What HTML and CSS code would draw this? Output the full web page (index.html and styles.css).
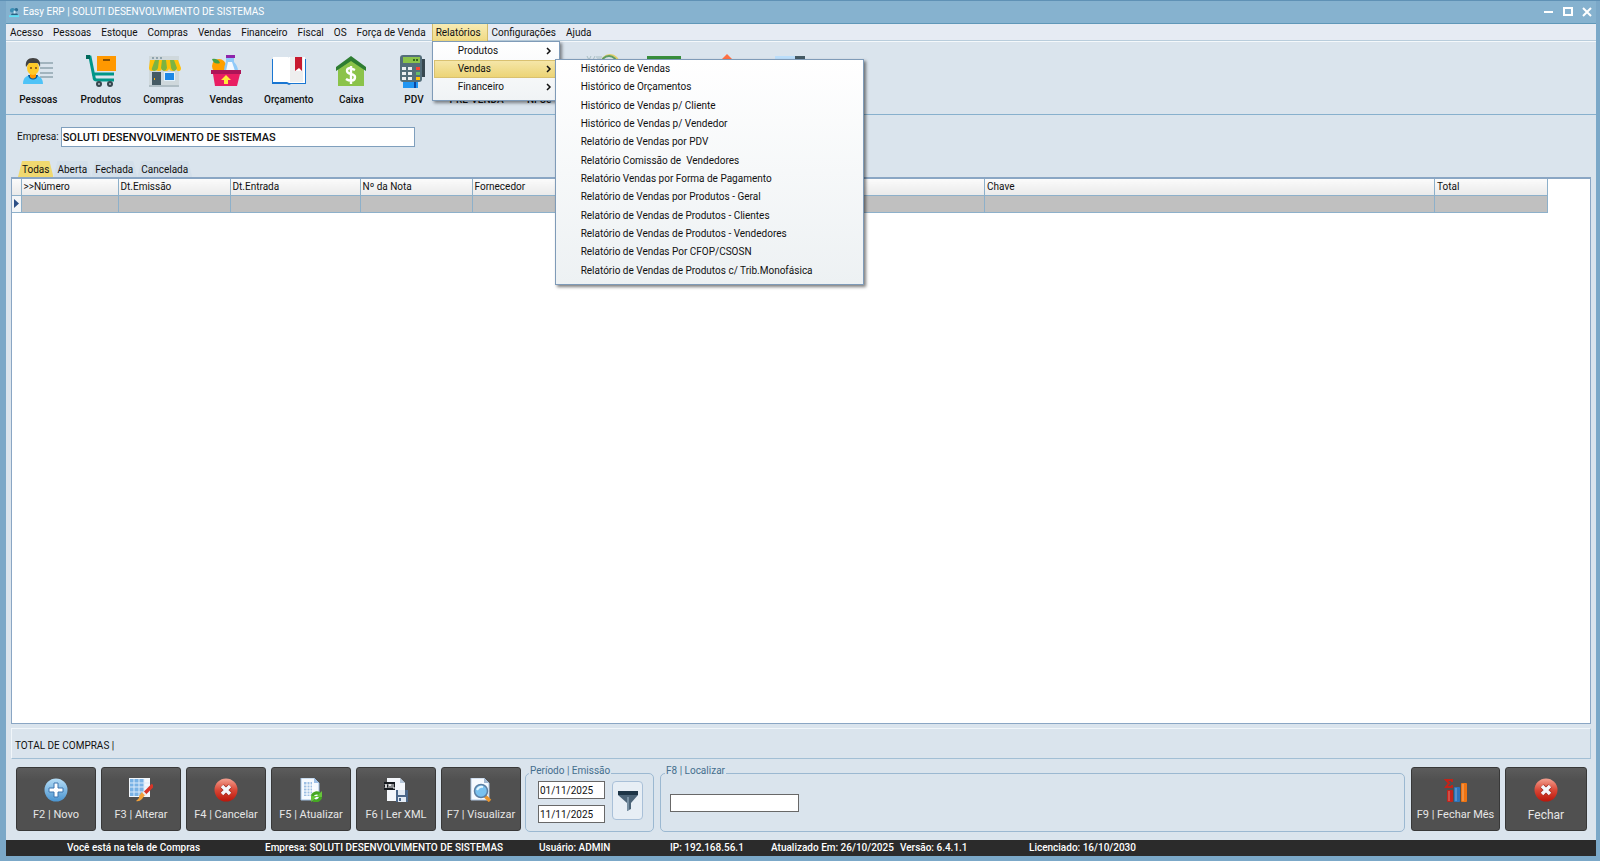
FILE: index.html
```html
<!DOCTYPE html>
<html lang="pt-BR">
<head>
<meta charset="utf-8">
<title>Easy ERP | SOLUTI DESENVOLVIMENTO DE SISTEMAS</title>
<link rel="stylesheet" href="styles.css">
</head>
<body>
<div class="window">
  <header class="titlebar">
    <svg class="app-icon" viewBox="0 0 12 12"><path d="M1 4q0-3 3-3t2 3q1 2-2 2-3 0-3-2z" fill="#3c8fb5"/><circle cx="8" cy="3" r="2" fill="#2d6f94"/><path d="M3 7h6l1 2H2z" fill="#2a6384"/><path d="M0 9h11v2H0z" fill="#5ee0f5"/><path d="M5 4h2v3H5z" fill="#c9e8f4"/></svg>
    <h1 class="title">Easy ERP | SOLUTI DESENVOLVIMENTO DE SISTEMAS</h1>
    <div class="win-controls">
      <button class="win-btn" aria-label="Minimizar"><svg viewBox="0 0 12 12"><path d="M1 6h9" /></svg></button>
      <button class="win-btn" aria-label="Maximizar"><svg viewBox="0 0 12 12"><rect x="2" y="2" width="8" height="7"/></svg></button>
      <button class="win-btn" aria-label="Fechar janela"><svg viewBox="0 0 12 12"><path d="M2 2l8 8M10 2l-8 8"/></svg></button>
    </div>
  </header>

  <nav class="menubar">
    <button class="menu">Acesso</button>
    <button class="menu">Pessoas</button>
    <button class="menu">Estoque</button>
    <button class="menu">Compras</button>
    <button class="menu">Vendas</button>
    <button class="menu">Financeiro</button>
    <button class="menu">Fiscal</button>
    <button class="menu">OS</button>
    <button class="menu">Força de Venda</button>
    <div class="menu-open">
      <button class="menu menu-active">Relatórios</button>
      <div class="dropdown">
        <button class="drop-item">Produtos<svg class="arrow" viewBox="0 0 6 8"><path d="M1 1l3 3-3 3"/></svg></button>
        <button class="drop-item drop-active">Vendas<svg class="arrow" viewBox="0 0 6 8"><path d="M1 1l3 3-3 3"/></svg></button>
        <button class="drop-item">Financeiro<svg class="arrow" viewBox="0 0 6 8"><path d="M1 1l3 3-3 3"/></svg></button>
        <div class="submenu">
          <button class="sub-item">Histórico de Vendas</button>
          <button class="sub-item">Histórico de Orçamentos</button>
          <button class="sub-item">Histórico de Vendas p/ Cliente</button>
          <button class="sub-item">Histórico de Vendas p/ Vendedor</button>
          <button class="sub-item">Relatório de Vendas por PDV</button>
          <button class="sub-item">Relatório Comissão de &nbsp;Vendedores</button>
          <button class="sub-item">Relatório Vendas por Forma de Pagamento</button>
          <button class="sub-item">Relatório de Vendas por Produtos - Geral</button>
          <button class="sub-item">Relatório de Vendas de Produtos - Clientes</button>
          <button class="sub-item">Relatório de Vendas de Produtos - Vendedores</button>
          <button class="sub-item">Relatório de Vendas Por CFOP/CSOSN</button>
          <button class="sub-item">Relatório de Vendas de Produtos c/ Trib.Monofásica</button>
        </div>
      </div>
    </div>
    <button class="menu">Configurações</button>
    <button class="menu">Ajuda</button>
  </nav>

  <div class="toolbar">
    <button class="tool">
      <svg viewBox="0 0 36 36"><path d="M15 11h18M20 16h13M20 21h13M20 25h13" stroke="#90a4ae" stroke-width="1.6"/><path d="M3 32c0-7 4-9 10-9s10 3 10 9z" fill="#4fc3f7"/><path d="M8 23h10c-1 6-9 6-10 0z" fill="#01579b"/><path d="M10 19h6v6q-3 3-6 0z" fill="#ff9800"/><ellipse cx="13" cy="16" rx="6" ry="7" fill="#ffca28"/><path d="M6 15c-1-6 2-9 7-9s8 3 7 9l-2-4H9z" fill="#424242"/><circle cx="11" cy="16" r="1" fill="#784719"/><circle cx="16" cy="16" r="1" fill="#784719"/></svg>
      <span>Pessoas</span>
    </button>
    <button class="tool">
      <svg viewBox="0 0 36 36"><path d="M14 4h19v15H14z" fill="#ff9800"/><path d="M20 7h7v2h-7z" fill="#8a5000"/><path d="M3 5h4l4 20q0 3 3 3h17M9 22h22" fill="none" stroke="#009688" stroke-width="3"/><path d="M3 5h4" stroke="#00695c" stroke-width="4"/><g fill="#37474f"><circle cx="16" cy="32" r="3"/><circle cx="27" cy="32" r="3"/></g><g fill="#b0bec5"><circle cx="16" cy="32" r="1"/><circle cx="27" cy="32" r="1"/></g></svg>
      <span>Produtos</span>
    </button>
    <button class="tool">
      <svg viewBox="0 0 36 36"><path d="M3 4h30v31H3z" fill="#cfd8dc"/><path d="M3 33h30v2H3z" fill="#b0bec5"/><path d="M6 20h9v13H6z" fill="#455a64"/><path d="M8 26h1v2H8z" fill="#ffb300"/><path d="M18 20h11v9H18z" fill="#e3f2fd"/><path d="M19 21h9v7h-9z" fill="#1e88e5"/><path d="M4 8h28l3 8q0 3-2 3-3 0-3-3 0 3-3 3-4 0-4-3 0 3-3 3-4 0-4-3 0 3-3 3-4 0-4-3 0 3-3 3-3 0-3-3z" fill="#ffc107"/><path d="M9 8h4l-1 8q-1 3-4 3-3-1-2-3zM16 8h4l1 8q-1 3-3 3t-3-3zM24 8h4l3 8q-1 3-3 3t-3-3z" fill="#7cb342"/><path d="M6 5h2v2H6zM10 5h2v2h-2zM14 5h2v2h-2z" fill="#90a4ae"/></svg>
      <span>Compras</span>
    </button>
    <button class="tool">
      <svg viewBox="0 0 36 36"><circle cx="11" cy="14" r="7" fill="#ffa000"/><path d="M4 7q6-1 8 4-6 2-8-4z" fill="#43a047"/><path d="M18 5h8v5q4 4 4 9H16q0-5 2-9z" fill="#90caf9"/><path d="M20 10h4l3 9h-9z" fill="#f5f9ff"/><path d="M18 3h9v3h-9z" fill="#8e24aa"/><path d="M3 18h30v4H3z" fill="#ad1457"/><path d="M5 22h27l-3 12H7z" fill="#e91e63"/><path d="M18 23l5 5h-3v4h-4v-4h-3z" fill="#ffeb3b"/></svg>
      <span>Vendas</span>
    </button>
    <button class="tool">
      <svg viewBox="0 0 36 36"><path d="M1 7h34v25H20l-2 1-2-1H1z" fill="#1976d2"/><path d="M2 5h15l1 1v25l-2-1H2z" fill="#fff"/><path d="M18 5h16v26H18z" fill="#fff"/><path d="M19 5h5v25h-5zM30 5h2v25h-8V19h6z" fill="#eee"/><path d="M24 5h7v14l-3-3-4 3z" fill="#c8192e"/></svg>
      <span>Orçamento</span>
    </button>
    <button class="tool">
      <svg viewBox="0 0 36 36"><path d="M5 15L18 6l13 9v19H5z" fill="#8bc34a"/><path d="M18 4l15 11v4L18 9 3 19v-4z" fill="#2e7d32"/><path d="M22 18q-8-4-8 1c0 4 8 2 8 6 0 5-6 4-9 2M18 14v18" fill="none" stroke="#fff" stroke-width="2.4"/></svg>
      <span>Caixa</span>
    </button>
    <button class="tool">
      <svg viewBox="0 0 36 36"><path d="M7 29h15v7H7z" fill="#2196f3"/><path d="M18 29h2v7h-2z" fill="#0d47a1"/><path d="M22 7h7v18h-7z" fill="#37474f"/><rect x="4" y="3" width="22" height="27" rx="3" fill="#546e7a"/><path d="M7 5h17v6H7z" fill="#8bc34a"/><path d="M17 7h2v2h-2zM20 7h2v2h-2z" fill="#33691e"/><path d="M6 15h4v3H6zM12 15h4v3h-4zM6 20h4v3H6zM12 20h4v3h-4zM6 25h4v3H6zM12 25h4v3h-4z" fill="#eceff1"/><path d="M20 15h4v3h-4z" fill="#f44336"/><path d="M20 20h4v3h-4z" fill="#66bb6a"/><path d="M20 25h4v3h-4z" fill="#ffc107"/></svg>
      <span>PDV</span>
    </button>
    <button class="tool"><svg viewBox="0 0 36 36"></svg><span>PRÉ-VENDA</span></button>
    <button class="tool"><svg viewBox="0 0 36 36"></svg><span>NFCe</span></button>
    <button class="tool" aria-label="Nota"><svg viewBox="0 0 36 36"><path d="M3 4l2 4 2-4M9 8l2-4M12 5h6M13 7h4" fill="none" stroke="#a9bfc4"/><circle cx="26" cy="12" r="9" fill="none" stroke="#e2cf6a" stroke-width="2"/><circle cx="25" cy="12" r="8" fill="none" stroke="#5f9d63" stroke-width="2"/></svg></button>
    <button class="tool" aria-label="Dinheiro"><svg viewBox="0 0 36 36"><path d="M1 4h34v20H1z" fill="#388e3c"/><path d="M4 7h28v14H4z" fill="#a5d6a7"/><circle cx="18" cy="14" r="7" fill="#388e3c"/></svg></button>
    <button class="tool" aria-label="Entrada"><svg viewBox="0 0 36 36"><path d="M18 2l12 12H6z" fill="#ff7043"/></svg></button>
    <button class="tool" aria-label="Saída"><svg viewBox="0 0 36 36"><path d="M3 4h20v20H3z" fill="#bbdefb"/><path d="M23 4h10v20H23z" fill="#455a64"/></svg></button>
  </div>

  <main class="content">
    <div class="company">
      <label for="empresa">Empresa:</label>
      <input id="empresa" class="company-input" value="SOLUTI DESENVOLVIMENTO DE SISTEMAS">
    </div>

    <div class="tabs">
      <button class="tab tab-active">Todas</button>
      <button class="tab">Aberta</button>
      <button class="tab">Fechada</button>
      <button class="tab">Cancelada</button>
    </div>

    <div class="grid">
      <table class="orders">
        <colgroup><col class="c-mark"><col class="c-num"><col class="c-date"><col class="c-entry"><col class="c-date"><col class="c-supplier"><col class="c-key"><col class="c-total"></colgroup>
        <thead><tr><th></th><th>&gt;&gt;Número</th><th>Dt.Emissão</th><th>Dt.Entrada</th><th>Nº da Nota</th><th>Fornecedor</th><th>Chave</th><th>Total</th></tr></thead>
        <tbody><tr><td class="mark"><svg viewBox="0 0 5 9"><path d="M0 0l5 4.500L0 9z" fill="#2c4f86"/></svg></td><td></td><td></td><td></td><td></td><td></td><td></td><td></td></tr></tbody>
      </table>
    </div>

    <div class="total">TOTAL DE COMPRAS |</div>

    <div class="actions">
      <div class="action-group">
        <button class="action"><svg viewBox="0 0 24 24"><defs><linearGradient id="blue" x2="0" y2="1"><stop stop-color="#b5ddf6"/><stop offset="1" stop-color="#4a94d0"/></linearGradient></defs><circle cx="12" cy="12" r="11.500" fill="url(#blue)"/><path d="M10 5h4v5h5v4h-5v5h-4v-5H5v-4h5z" fill="#fff" stroke="#3d75ae"/></svg>F2 | Novo</button>
        <button class="action"><svg viewBox="0 0 24 24"><path d="M0 0h21v19H0z" fill="#f2f7fc"/><path d="M1 1h14v17H1z" fill="#79b2e5"/><path d="M1 5h20M1 9h20M1 14h20M5 1v17M10 1v17M15 1v17" stroke="#dceafa"/><path d="M24 7L15 16" stroke="#d83427" stroke-width="3.500"/><path d="M13 14l3 3-3 4q-3 3-6 2 4-3 3-5z" fill="#f2a13a"/><path d="M14 14l3 3" stroke="#eee" stroke-width="2"/></svg>F3 | Alterar</button>
        <button class="action"><svg viewBox="0 0 24 24"><defs><linearGradient id="red" x2="0" y2="1"><stop stop-color="#f3a090"/><stop offset=".5" stop-color="#d94736"/><stop offset="1" stop-color="#b9160b"/></linearGradient></defs><circle cx="12" cy="12" r="11.500" fill="url(#red)"/><path d="M8 8l8 8M16 8l-8 8" stroke="#9c281f" stroke-width="5"/><path d="M8 8l8 8M16 8l-8 8" stroke="#f4f6fb" stroke-width="3.500"/></svg>F4 | Cancelar</button>
        <button class="action"><svg viewBox="0 0 24 24"><path d="M2 0h13l5 5v17H2z" fill="#f6faff" stroke="#9dbde0"/><path d="M15 0v5h5" fill="#9fc0e6"/><path d="M5 4h8v14H5z" fill="#9dbfe4"/><path d="M5 7h9M5 10h12M5 13h12M5 16h10M8 4v14M11 4v14" stroke="#fff"/><path d="M13 18q3-5 8-2M22 19q-3 6-8 3" fill="none" stroke="#45a623" stroke-width="3"/><path d="M23 13v6h-6zM12 24v-6h6z" fill="#66c43a"/></svg>F5 | Atualizar</button>
        <button class="action"><svg viewBox="0 0 24 24"><path d="M3 0h13l5 5v18H3z" fill="#f4f7fb"/><path d="M16 0v5h5" fill="#b5c6d8"/><path d="M0 4h11v8H0z" fill="#161a1e"/><path d="M1 6l2 4M3 6l-2 4M5 10V6l1 2 1-2v4M9 6v4h2" fill="none" stroke="#fff"/><path d="M12 12h12v12H12z" fill="#4c6789"/><path d="M14 12h7v5h-7zM14 19h8v5h-8z" fill="#e3ebf4"/><path d="M15 20h2v3h-2z" fill="#4c6789"/></svg>F6 | Ler XML</button>
        <button class="action"><svg viewBox="0 0 24 24"><path d="M2 0h13l5 5v17H2z" fill="#f6faff" stroke="#adc4df"/><path d="M15 0v5h5" fill="#9fb6cf"/><path d="M16 18l5 5" stroke="#e9952e" stroke-width="3.500"/><circle cx="12" cy="13" r="6.500" fill="#79c1ef" stroke="#5c7fa3" stroke-width="1.500"/><path d="M8 12q2-4 6-3" fill="none" stroke="#e4f6ff" stroke-width="2"/></svg>F7 | Visualizar</button>
      </div>

      <fieldset class="group period">
        <legend>Período | Emissão</legend>
        <div class="dates">
          <input class="field" aria-label="Data inicial" value="01/11/2025">
          <input class="field" aria-label="Data final" value="11/11/2025">
        </div>
        <button class="filter" aria-label="Filtrar"><svg viewBox="0 0 20 20"><path d="M0 0h20v4l-7 8v6l-4 2v-8L0 4z" fill="#4c6478"/><path d="M0 0h20v4H0z" fill="#1e3547"/><path d="M9 6h2v13l-2 1z" fill="#7890a3"/></svg></button>
      </fieldset>

      <fieldset class="group search">
        <legend>F8 | Localizar</legend>
        <input class="field search-input" aria-label="Localizar">
      </fieldset>

      <div class="action-group end">
        <button class="action month"><svg viewBox="0 0 24 24"><path d="M8 4V2H2l3 3-3 4h6V7" fill="none" stroke="#c32318" stroke-width="2"/><rect x="3" y="12" width="6" height="12" rx="1" fill="#c4241b"/><rect x="10" y="9" width="6" height="15" rx="1" fill="#2d74bb"/><rect x="17" y="5" width="6" height="19" rx="1" fill="#ee7412"/><path d="M5 13v10M12 10v13M19 6v17" stroke="#fff" opacity=".4"/></svg>F9 | Fechar Mês</button>
        <button class="action close"><svg viewBox="0 0 24 24"><circle cx="12" cy="12" r="11.500" fill="url(#red)"/><path d="M8 8l8 8M16 8l-8 8" stroke="#9c281f" stroke-width="5"/><path d="M8 8l8 8M16 8l-8 8" stroke="#f4f6fb" stroke-width="3.500"/></svg>Fechar</button>
      </div>
    </div>
  </main>

  <footer class="status">
    <span class="s-screen">Você está na tela de Compras</span>
    <span class="s-company">Empresa: SOLUTI DESENVOLVIMENTO DE SISTEMAS</span>
    <span class="s-user">Usuário: ADMIN</span>
    <span class="s-ip">IP: 192.168.56.1</span>
    <span class="s-date">Atualizado Em: 26/10/2025</span>
    <span class="s-version">Versão: 6.4.1.1</span>
    <span>Licenciado: 16/10/2030</span>
  </footer>
</div>
</body>
</html>
```
FILE: styles.css
```css
* { box-sizing: border-box; }

body {
  margin: 0;
  font: 10px/16px Roboto, "Open Sans", sans-serif;
  color: #111;
}

button, input { font: inherit; color: inherit; }
button { margin: 0; padding: 0; border: 0; background: none; white-space: nowrap; }

.window {
  display: flex;
  flex-direction: column;
  min-height: 100vh;
  padding: 0 4px 5px 6px;
  background: #7ba8c8;
  border-top: 1px solid #5f91b5;
}

.titlebar {
  display: flex;
  align-items: center;
  height: 23px;
  padding: 0 3px;
  background: #86b2cf;
  border-bottom: 1px solid #5f97b8;
}
.app-icon { width: 11px; height: 11px; margin-right: 3px; }
.title { flex: 1; margin: 0; font-size: 10px; font-weight: 400; color: #fff; }
.win-controls { display: flex; gap: 7px; }
.win-btn { width: 12px; height: 12px; }
.win-btn svg { display: block; fill: none; stroke: #fff; stroke-width: 2; }

.menubar {
  display: flex;
  height: 17px;
  background: #e6ebf3;
  border-bottom: 1px solid #b9cddc;
}
.menu { height: 17px; padding: 0 6px 0 4px; }
.menu-open { position: relative; }
.menu-active { padding: 0 6px 0 3px; background: linear-gradient(#f8ebb4, #f0da82); border: 1px solid #d2bb6a; border-top: 0; border-bottom: 0; }

.dropdown {
  position: absolute;
  z-index: 2;
  top: 17px;
  left: 0;
  width: 128px;
  padding: 0 1px 4px;
  background: linear-gradient(#fff, #f0f3f5);
  border: 1px solid #7f9bb8;
  box-shadow: 2px 2px 3px rgba(0, 0, 0, .45);
}
.drop-item {
  display: flex;
  align-items: center;
  justify-content: space-between;
  width: 100%;
  height: 18px;
  padding: 0 6px 0 24px;
}
.drop-active { background: linear-gradient(#f5e6a8, #ecd476); border: 1px solid #d9c170; padding: 0 5px 0 23px; }
.arrow { width: 6px; height: 8px; fill: none; stroke: #111; stroke-width: 1.500; }

.submenu {
  position: absolute;
  top: 17px;
  left: 122px;
  display: flex;
  flex-direction: column;
  width: 309px;
  height: 226px;
  padding: 0 1px 4px;
  background: linear-gradient(#fff, #edf1f3);
  border: 1px solid #7f9bb8;
  box-shadow: 2px 2px 3px rgba(0, 0, 0, .5);
}
.sub-item { flex: 1; padding-left: 24px; text-align: left; }

.toolbar {
  display: flex;
  align-items: flex-start;
  height: 74px;
  padding: 10px 775px 0 1px;
  background: #dae4ed;
  border-top: 1px solid #f4f8fb;
  border-bottom: 1px solid #87b0cd;
}
.tool { display: flex; flex: 1 0 0; flex-direction: column; align-items: center; gap: 4px; min-width: 0; font-weight: 500; }
.tool svg { width: 36px; height: 36px; }

.content { display: flex; flex: 1; flex-direction: column; padding: 12px 5px 8px; background: #dae4ed; }

.company { display: flex; align-items: center; gap: 2px; padding-left: 6px; }
.company-input { width: 354px; height: 20px; padding: 0 1px; border: 1px solid #7f9fbd; background: #fff; font-size: 11px; font-weight: 500; }

.tabs { display: flex; margin-top: 14px; padding-left: 7px; }
.tab { height: 16px; padding: 1px 4px 0; line-height: 15px; background: #d3dfea; clip-path: polygon(4px 0, calc(100% - 4px) 0, 100% 100%, 0 100%); }
.tab-active { background: #f0d970; }

.grid { flex: 1; background: #fff; border: 1px solid #8aa6c4; border-top: 2px solid #8aa6c4; }
.orders { width: calc(100% - 42px); table-layout: fixed; border-collapse: collapse; }
.orders th { height: 16px; padding: 0 2px; background: linear-gradient(#fbfbfb, #eaeaea); border-right: 1px solid #8db0ca; border-bottom: 1px solid #8db0ca; font-weight: 400; text-align: left; line-height: 14px; }
.orders td { height: 17px; padding: 0; background: #c0c0c0; border-right: 1px solid #8db0ca; border-bottom: 1px solid #8db0ca; }
.orders .mark { padding-left: 2px; background: #f3f5f7; }
.mark svg { display: block; width: 5px; height: 9px; }
.c-mark { width: 9px; }
.c-num { width: 97px; }
.c-date { width: 112px; }
.c-entry { width: 130px; }
.c-key { width: 450px; }
.c-total { width: 113px; }

.total { margin-top: 4px; padding: 9px 3px 4px; line-height: 16px; border: 1px solid #f1f6fa; border-right-color: #a8c4d9; border-bottom: 1px solid #a2bfd5; }

.actions { display: flex; align-items: flex-start; gap: 4px; margin-top: 8px; padding: 0 4px 0 5px; }
.action-group { display: flex; gap: 5px; }
.action {
  display: flex;
  flex-direction: column;
  align-items: center;
  width: 80px;
  height: 64px;
  padding-top: 10px;
  gap: 4px;
  background: linear-gradient(#5c5c5c, #505050 20%, #505050);
  border: 1px solid #383838;
  border-radius: 3px;
  color: #e6e6e6;
  font-size: 11px;
  line-height: 18px;
}
.action svg { width: 24px; height: 24px; }
.month { width: 89px; }
.close { width: 82px; font-size: 12px; }

.group { display: flex; height: 65px; min-width: 0; margin: 0; padding: 2px 8px 0 12px; border: 1px solid #9bb8d1; border-radius: 5px; }
.group legend { margin-left: -9px; padding: 0 1px; height: 12px; line-height: 8px; color: #456f8d; }
.period { width: 129px; gap: 7px; }
.dates { display: flex; flex-direction: column; gap: 6px; }
.field { width: 67px; height: 18px; padding: 0 1px; border: 1px solid #686868; background: #fff; }
.filter { display: flex; align-items: center; justify-content: center; width: 31px; height: 39px; background: #e7eef5; border: 1px solid #a9c0d8; border-radius: 4px; }
.filter svg { width: 20px; height: 20px; }
.search { flex: 1; margin: 0 2px; padding-left: 9px; align-items: flex-start; }
.search legend { margin-left: -5px; }
.search-input { width: 129px; margin-top: 13px; }

.status { display: flex; height: 16px; padding-left: 61px; line-height: 16px; background: #2b2b2b; color: #fff; font-weight: 500; white-space: nowrap; }
.s-screen { width: 198px; }
.s-company { width: 274px; }
.s-user { width: 131px; }
.s-ip { width: 101px; }
.s-date { width: 129px; }
.s-version { width: 129px; }
```
